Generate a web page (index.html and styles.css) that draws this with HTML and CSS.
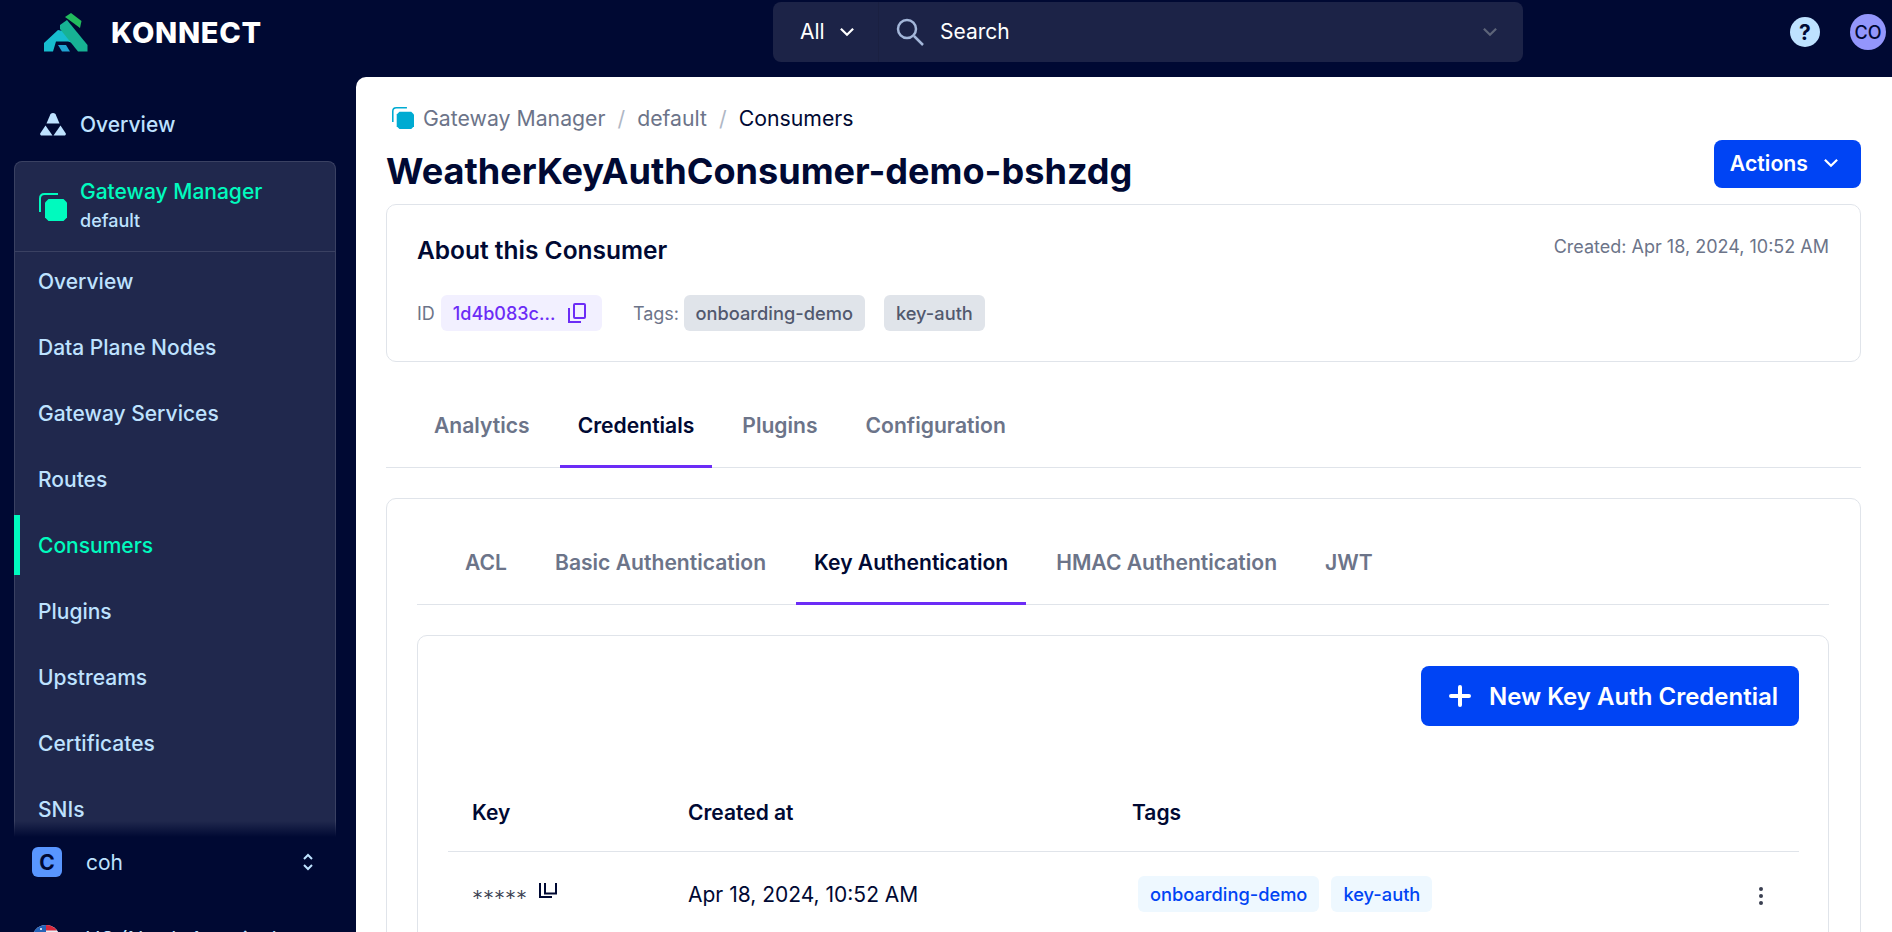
FILE: index.html
```html
<!DOCTYPE html>
<html lang="en">
<head>
    <meta charset="UTF-8">
    <meta name="viewport" content="width=device-width, initial-scale=1.0">
    <title>WeatherKeyAuthConsumer-demo-bshzdg</title>
    <link rel="stylesheet" href="styles.css">
</head>
<body>
    <svg class="defs" width="0" height="0">
        <symbol id="stack-icon" viewBox="0 0 28 28">
            <path d="M1 19V5.500Q1 1 5.500 1H19" fill="none" stroke="currentColor" stroke-width="2"/>
            <path d="M9.500 6H24.500L28 9.500V24.500L24.500 28H9.500L6 24.500V9.500Z" fill="currentColor"/>
        </symbol>
        <symbol id="chevron" viewBox="0 0 14 9">
            <path d="M1.500 1.500L7 7L12.500 1.500" fill="none" stroke="currentColor" stroke-width="2"/>
        </symbol>
    </svg>

    <!-- Top bar -->
    <header class="topbar">
        <div class="brand">
            <svg class="brand-logo" width="44" height="39" viewBox="0 0 44 39">
                <path d="M21 4L27 0L37.500 8L36 15L30 10.500Z" fill="#22bb5e"/>
                <path d="M0 30L14 17L19 18L29 30L24 28.500H12L9 38.500H0Z" fill="#17bdcf"/>
                <path d="M16 12L23 7L43.500 32V38.500H34L16 16Z" fill="#17b294"/>
                <path d="M14 32H22L26 38.500H18Z" fill="#20a3d4"/>
            </svg>
            <span class="brand-name">KONNECT</span>
        </div>
        <div class="search">
            <div class="search-scope">
                <span class="search-label">All</span>
                <svg class="search-chevron" width="16" height="10"><use href="#chevron"/></svg>
            </div>
            <svg class="search-icon" width="28" height="28" viewBox="0 0 28 28">
                <circle cx="11" cy="11" r="9" fill="none" stroke="#a3b6d9" stroke-width="2.500"/>
                <path d="M18 18L27 27" stroke="#a3b6d9" stroke-width="2.500"/>
            </svg>
            <span class="search-label search-text">Search</span>
            <svg class="search-caret" width="16" height="10"><use href="#chevron"/></svg>
        </div>
        <div class="topbar-actions">
            <span class="help-btn">?</span>
            <span class="avatar">CO</span>
        </div>
    </header>

    <div class="layout">
        <!-- Sidebar -->
        <aside class="sidebar">
            <a class="top-link">
                <svg width="26" height="23" viewBox="0 0 26 23" fill="#bee2ff">
                    <path d="M10.500 1Q13 -1 15.500 1L19.500 10.500H6.500Z"/>
                    <path d="M5.500 12.500L12.500 22.500H1Q-0.500 21.500 0.500 20Z"/>
                    <path d="M20.500 12.500L25.500 20Q26.500 21.500 25 22.500H13.500Z"/>
                </svg>
                <span>Overview</span>
            </a>
            <nav class="section">
                <div class="section-head">
                    <svg class="section-icon" width="28" height="28"><use href="#stack-icon"/></svg>
                    <div class="section-text">
                        <div class="section-title">Gateway Manager</div>
                        <div class="section-sub">default</div>
                    </div>
                </div>
                <ul class="nav-list">
                    <li class="nav-item">Overview</li>
                    <li class="nav-item">Data Plane Nodes</li>
                    <li class="nav-item">Gateway Services</li>
                    <li class="nav-item">Routes</li>
                    <li class="nav-item active">Consumers</li>
                    <li class="nav-item">Plugins</li>
                    <li class="nav-item">Upstreams</li>
                    <li class="nav-item">Certificates</li>
                    <li class="nav-item">SNIs</li>
                </ul>
            </nav>
            <div class="side-footer">
                <div class="org-row">
                    <span class="org-badge">C</span>
                    <span class="org-name">coh</span>
                    <svg class="org-arrows" width="12" height="18" viewBox="0 0 12 18" fill="none" stroke="#bee2ff" stroke-width="2">
                        <path d="M2 6L6 2L10 6"/>
                        <path d="M2 12L6 16L10 12"/>
                    </svg>
                </div>
                <div class="region-row">
                    <svg class="flag" width="28" height="28" viewBox="0 0 28 28">
                        <circle cx="14" cy="14" r="14" fill="#e8eef5"/>
                        <path d="M14 0A14 14 0 0 1 25 5.500H14Z" fill="#d8283c"/>
                        <path d="M14 7.500H26.500L28 14H14Z" fill="#d8283c"/>
                        <path d="M14 0A14 14 0 0 0 0 14H14Z" fill="#2563b8"/>
                        <circle cx="9" cy="4" r="1" fill="#fff"/>
                        <circle cx="5" cy="8" r="1" fill="#fff"/>
                    </svg>
                    <span class="region-name">US (North America)</span>
                </div>
            </div>
        </aside>

        <!-- Main content -->
        <main class="main">
            <div class="breadcrumb">
                <svg class="crumb-icon" width="22" height="22"><use href="#stack-icon"/></svg>
                <span>Gateway Manager</span>
                <span class="crumb-sep">/</span>
                <span>default</span>
                <span class="crumb-sep">/</span>
                <span class="crumb-current">Consumers</span>
            </div>
            <div class="page-head">
                <h1>WeatherKeyAuthConsumer-demo-bshzdg</h1>
                <button class="btn btn-actions">Actions <svg width="16" height="10"><use href="#chevron"/></svg></button>
            </div>

            <section class="card about">
                <div class="about-head">
                    <h2>About this Consumer</h2>
                    <span class="muted created">Created: Apr 18, 2024, 10:52 AM</span>
                </div>
                <div class="about-meta">
                    <span class="muted">ID</span>
                    <span class="badge badge-id">1d4b083c...
                        <svg width="18" height="20" viewBox="0 0 18 20" fill="none" stroke="currentColor" stroke-width="2">
                            <rect x="6" y="1" width="11" height="14" rx="1"/>
                            <path d="M1 5V19H13"/>
                        </svg>
                    </span>
                    <span class="muted tags-label">Tags:</span>
                    <span class="badge badge-grey">onboarding-demo</span>
                    <span class="badge badge-grey">key-auth</span>
                </div>
            </section>

            <div class="tabs tabs-top">
                <a class="tab">Analytics</a>
                <a class="tab active">Credentials</a>
                <a class="tab">Plugins</a>
                <a class="tab">Configuration</a>
            </div>

            <section class="card creds">
                <div class="tabs tabs-sub">
                    <a class="tab">ACL</a>
                    <a class="tab">Basic Authentication</a>
                    <a class="tab active">Key Authentication</a>
                    <a class="tab">HMAC Authentication</a>
                    <a class="tab">JWT</a>
                </div>
                <div class="card table-card">
                    <div class="table-toolbar">
                        <button class="btn btn-new">
                            <svg width="22" height="22" viewBox="0 0 22 22" stroke="#fff" stroke-width="4" stroke-linecap="round"><path d="M11 2V20M2 11H20"/></svg>
                            New Key Auth Credential
                        </button>
                    </div>
                    <div class="table-row table-header">
                        <span class="col-key">Key</span>
                        <span class="col-date">Created at</span>
                        <span class="col-tags">Tags</span>
                    </div>
                    <div class="table-row table-body">
                        <span class="col-key key-value">
                            <span class="key-mask">*****</span>
                            <svg width="18" height="15" viewBox="0 0 18 15" fill="none" stroke="#000933" stroke-width="2">
                                <path d="M1 0V14H13"/>
                                <path d="M6 0V10.500H17V0"/>
                            </svg>
                        </span>
                        <span class="col-date">Apr 18, 2024, 10:52 AM</span>
                        <span class="col-tags row-tags">
                            <span class="badge badge-blue">onboarding-demo</span>
                            <span class="badge badge-blue">key-auth</span>
                        </span>
                        <svg class="kebab" width="4" height="18" viewBox="0 0 4 18" fill="#3a3f51">
                            <circle cx="2" cy="2" r="2"/>
                            <circle cx="2" cy="9" r="2"/>
                            <circle cx="2" cy="16" r="2"/>
                        </svg>
                    </div>
                </div>
            </section>
        </main>
    </div>
</body>
</html>
```

FILE: styles.css
```css
* {
    box-sizing: border-box;
}

html, body {
    height: 100%;
}

body {
    margin: 0;
    background-color: #000933;
    color: #000933;
    font-family: Inter, "Liberation Sans", sans-serif;
    overflow: hidden;
}

.defs {
    display: block;
}

/* Top bar */
.topbar {
    display: grid;
    grid-template-columns: 773px 750px 1fr;
    align-items: center;
    height: 77px;
}

.brand {
    display: flex;
    align-items: center;
    gap: 23px;
    padding-left: 44px;
    padding-bottom: 13px;
}

.brand-name {
    color: #ffffff;
    font-size: 29px;
    font-weight: 800;
    letter-spacing: 0.7px;
    line-height: 1;
}

.search {
    display: flex;
    align-items: center;
    height: 60px;
    margin-bottom: 13px;
    background-color: #1c2347;
    border-radius: 8px;
    color: #ffffff;
    font-size: 21px;
}

.search-scope {
    display: flex;
    align-items: center;
    gap: 14px;
    width: 106px;
    height: 100%;
    padding-left: 27px;
    border-right: 1px solid #1a2041;
}

.search-label {
    margin-bottom: 2px;
}

.search-icon {
    margin-left: 17px;
}

.search-text {
    margin-left: 16px;
    flex: 1;
}

.search-caret {
    margin-right: 25px;
    color: #5d6479;
}

.topbar-actions {
    display: flex;
    justify-content: flex-end;
    align-items: center;
    gap: 30px;
    padding-right: 6px;
    padding-bottom: 13px;
}

.help-btn {
    display: flex;
    align-items: center;
    justify-content: center;
    width: 30px;
    height: 30px;
    border-radius: 50%;
    background-color: #bee2ff;
    font-size: 21px;
    font-weight: 700;
}

.avatar {
    display: flex;
    align-items: center;
    justify-content: center;
    width: 36px;
    height: 36px;
    border-radius: 50%;
    background-color: #9396fc;
    font-size: 18px;
    font-weight: 500;
}

/* Page layout */
.layout {
    display: flex;
    height: 855px;
}

.sidebar {
    position: relative;
    display: flex;
    flex-direction: column;
    flex: 0 0 356px;
    padding: 0 20px 0 14px;
    overflow: hidden;
}

.top-link {
    display: flex;
    align-items: center;
    gap: 14px;
    height: 84px;
    padding-top: 10px;
    padding-left: 26px;
    color: #bee2ff;
    font-size: 21px;
    font-weight: 500;
}

.section {
    flex: 1;
    background-color: #20284d;
    border: 1px solid #3a4162;
    border-bottom: none;
    border-radius: 8px 8px 0 0;
}

.section-head {
    display: flex;
    align-items: center;
    gap: 13px;
    height: 90px;
    padding-left: 24px;
    border-bottom: 1px solid #3a4162;
}

.section-text {
    padding-bottom: 3px;
}

.section-title {
    color: #00fabe;
    font-size: 21px;
    font-weight: 500;
    margin-bottom: 6px;
}

.section-sub {
    color: #bee2ff;
    font-size: 18px;
    font-weight: 500;
}

.section-icon {
    color: #00fabe;
}

.nav-list {
    display: flex;
    flex-direction: column;
    gap: 6px;
    margin: -1px 0 0;
    padding: 0;
    list-style: none;
}

.nav-item {
    display: flex;
    align-items: center;
    height: 60px;
    padding-left: 23px;
    color: #bee2ff;
    font-size: 21px;
    font-weight: 500;
}

.nav-item.active {
    color: #00fabe;
    margin-left: -1px;
    padding-left: 18px;
    border-left: 6px solid #00fabe;
}

.side-footer {
    position: absolute;
    left: 0;
    right: 0;
    bottom: 0;
    height: 111px;
    padding-left: 32px;
    background: linear-gradient(to bottom, rgba(0, 9, 51, 0), #000933 16px);
}

.org-row {
    display: flex;
    align-items: center;
    height: 30px;
    margin-top: 26px;
}

.org-badge {
    display: flex;
    align-items: center;
    justify-content: center;
    width: 30px;
    height: 30px;
    border-radius: 6px;
    background-color: #5996ff;
    font-size: 21px;
    font-weight: 700;
}

.org-name {
    flex: 1;
    margin-left: 24px;
    color: #bee2ff;
    font-size: 21px;
}

.org-arrows {
    margin-right: 42px;
}

.region-row {
    display: flex;
    align-items: center;
    gap: 25px;
    margin-top: 48px;
}

.region-name {
    color: #bee2ff;
    font-size: 21px;
}

/* Main content */
.main {
    flex: 1;
    min-width: 0;
    padding: 0 31px 0 30px;
    background-color: #ffffff;
    border-radius: 10px 0 0 0;
    overflow: hidden;
}

.breadcrumb {
    display: flex;
    align-items: center;
    gap: 12px;
    height: 22px;
    margin-top: 30px;
    padding-left: 6px;
    color: #6c7489;
    font-size: 21.25px;
}

.crumb-icon {
    color: #00abd2;
    margin-right: -3px;
}

.crumb-sep {
    color: #afb7c5;
}

.crumb-current {
    color: #000933;
}

.page-head {
    display: flex;
    align-items: flex-start;
    justify-content: space-between;
    height: 59px;
    margin-bottom: 16px;
}

h1 {
    margin: 20px 0 0;
    font-size: 36.1px;
    font-weight: 700;
    line-height: 44px;
}

.btn {
    display: inline-flex;
    align-items: center;
    border: none;
    border-radius: 8px;
    background-color: #0044f4;
    color: #ffffff;
    font-family: inherit;
    font-weight: 600;
}

.btn-actions {
    align-self: flex-end;
    gap: 15px;
    height: 48px;
    padding: 0 22px 2px 16px;
    font-size: 21.25px;
}

.card {
    background-color: #ffffff;
    border: 1px solid #e0e4ea;
    border-radius: 10px;
}

.about {
    height: 158px;
    padding: 30px 31px 30px 30px;
}

.about-head {
    display: flex;
    justify-content: space-between;
    align-items: center;
    height: 30px;
}

h2 {
    margin: 0;
    font-size: 24.5px;
    font-weight: 600;
}

.muted {
    color: #6c7489;
    font-size: 18px;
}

.created {
    margin-bottom: 7px;
}

.about-meta {
    display: flex;
    align-items: center;
    gap: 6px;
    margin-top: 30px;
}

.badge {
    display: inline-flex;
    align-items: center;
    height: 36px;
    padding: 0 12px;
    border-radius: 6px;
    font-size: 18.25px;
    font-weight: 500;
}

.badge-id {
    gap: 13px;
    padding: 0 16px 0 12px;
    background-color: #f2f0ff;
    color: #6c2cf6;
    font-size: 18px;
}

.badge-grey {
    margin-right: 13px;
    background-color: #e0e4ea;
    color: #52596e;
}

.tags-label {
    margin-left: 24.5px;
    margin-right: -1.5px;
}

/* Tabs */
.tabs {
    display: flex;
    gap: 12px;
    border-bottom: 1px solid #e0e4ea;
}

.tab {
    display: flex;
    align-items: center;
    margin-bottom: -1px;
    padding: 23px 18px 0;
    color: #6c7489;
    font-size: 21.1px;
    font-weight: 600;
    border-bottom: 3px solid transparent;
}

.tab.active {
    color: #000933;
    border-bottom-color: #6c2cf6;
}

.tabs-top {
    height: 106px;
    padding-left: 30px;
}

.creds {
    height: 600px;
    margin-top: 30px;
    padding: 0 31px 0 30px;
}

.tabs-sub {
    height: 106px;
    padding-left: 30px;
}

.table-card {
    height: 400px;
    margin-top: 30px;
    padding: 0 29px 0 30px;
}

.table-toolbar {
    display: flex;
    justify-content: flex-end;
    padding-top: 30px;
}

.btn-new {
    gap: 18px;
    height: 60px;
    padding: 0 21px 0 28px;
    font-size: 24px;
}

.table-row {
    position: relative;
    display: flex;
    align-items: center;
    font-size: 21px;
}

.table-header {
    height: 85px;
    margin-top: 41px;
    padding-top: 7px;
    font-weight: 600;
    border-bottom: 1px solid #e0e4ea;
}

.table-body {
    height: 84px;
    font-weight: 400;
}

.col-key {
    width: 240px;
    padding-left: 24px;
}

.col-date {
    width: 444px;
}

.key-value {
    display: flex;
    align-items: center;
    gap: 12px;
}

.key-mask {
    padding-top: 7px;
    color: #3a3f51;
    font-size: 22px;
    font-weight: 300;
}

.key-value svg {
    margin-bottom: 7px;
}

.row-tags {
    display: flex;
    gap: 12px;
    margin-left: 6px;
}

.badge-blue {
    background-color: #eef8ff;
    color: #0044f4;
}

.kebab {
    position: absolute;
    right: 36px;
    top: 35px;
}
```
